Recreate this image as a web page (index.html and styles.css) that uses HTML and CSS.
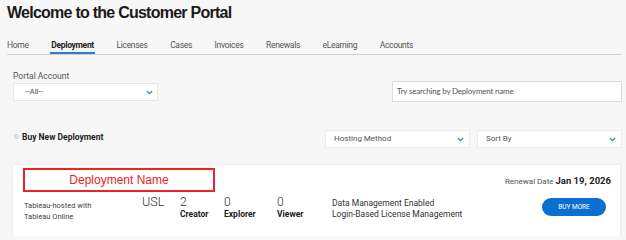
FILE: index.html
```html
<!DOCTYPE html>
<html lang="en">
<head>
<meta charset="utf-8">
<title>Customer Portal</title>
<link rel="stylesheet" href="styles.css">
</head>
<body>
<div class="page">
  <h1 class="title">Welcome to the Customer Portal</h1>
  <nav class="tabs">
    <a class="tab">Home</a>
    <a class="tab active">Deployment</a>
    <a class="tab">Licenses</a>
    <a class="tab">Cases</a>
    <a class="tab">Invoices</a>
    <a class="tab">Renewals</a>
    <a class="tab">eLearning</a>
    <a class="tab">Accounts</a>
  </nav>
  <div class="filters">
    <div class="field">
      <div class="label">Portal Account</div>
      <div class="select account">
        <span class="select-text">--All--</span>
        <svg class="chev" width="7" height="5" viewBox="0 0 7 5"><path d="M0.8 1 L3.5 3.6 L6.2 1" fill="none" stroke="#2f80d3" stroke-width="1.2"/></svg>
      </div>
    </div>
    <div class="search">Try searching by Deployment name</div>
  </div>
  <div class="actions">
    <div class="buy"><span class="dot"></span>Buy New Deployment</div>
    <div class="sorts">
      <div class="select sort">
        <span class="select-text">Hosting Method</span>
        <svg class="chev" width="7" height="5" viewBox="0 0 7 5"><path d="M0.8 1 L3.5 3.6 L6.2 1" fill="none" stroke="#2f80d3" stroke-width="1.2"/></svg>
      </div>
      <div class="select sort">
        <span class="select-text">Sort By</span>
        <svg class="chev" width="7" height="5" viewBox="0 0 7 5"><path d="M0.8 1 L3.5 3.6 L6.2 1" fill="none" stroke="#2f80d3" stroke-width="1.2"/></svg>
      </div>
    </div>
  </div>
  <div class="card">
    <div class="card-top">
      <div class="name-box">Deployment Name</div>
      <div class="renewal">Renewal Date <b>Jan 19, 2026</b></div>
    </div>
    <div class="card-row">
      <div class="hosting">Tableau-hosted with<br>Tableau Online</div>
      <div class="type">USL</div>
      <div class="count"><span class="num">2</span><span class="role">Creator</span></div>
      <div class="count"><span class="num">0</span><span class="role">Explorer</span></div>
      <div class="count"><span class="num">0</span><span class="role">Viewer</span></div>
      <div class="features">Data Management Enabled<br>Login-Based License Management</div>
      <div class="btn">BUY MORE</div>
    </div>
  </div>
</div>
</body>
</html>
```

FILE: styles.css
```css
html, body {
  margin: 0;
  padding: 0;
  background: #f7f7f7;
}
body {
  font-family: Roboto, "Liberation Sans", Arial, sans-serif;
  color: #222;
}
.page {
  padding: 0 4px 0 7px;
  width: 615px;
}
.title {
  margin: 0;
  padding-top: 2px;
  font-family: "Liberation Sans", Arial, sans-serif;
  font-weight: 700;
  font-size: 16px;
  line-height: 21px;
  letter-spacing: -0.75px;
  color: #1a1a1a;
}
.tabs {
  display: flex;
  gap: 22.5px;
  margin-top: 15px;
  border-bottom: 1px solid #cfcfcf;
}
.tab {
  font-size: 8.5px;
  letter-spacing: -0.3px;
  line-height: 11px;
  padding: 2px 0 3px;
  color: #555;
}
.tab.active {
  color: #222;
  font-weight: 700;
  padding-bottom: 1px;
  border-bottom: 2px solid #2a7fd4;
  margin: 0 -1px;
  padding-left: 1px;
  padding-right: 1px;
}
.filters {
  display: flex;
  justify-content: space-between;
  align-items: flex-end;
  margin-top: 16px;
  padding-left: 6px;
}
.label {
  font-size: 8.5px;
  line-height: 10px;
  color: #555;
  margin-bottom: 2px;
}
.select {
  display: flex;
  align-items: center;
  justify-content: space-between;
  box-sizing: border-box;
  height: 18px;
  background: #fff;
  border: 1px solid #e6e6e6;
  font-size: 8px;
  color: #555;
}
.select.account {
  width: 145px;
  padding: 0 4px 0 11px;
}
.select-text {
  line-height: 10px;
}
.chev {
  display: block;
}
.search {
  box-sizing: border-box;
  width: 230px;
  height: 21px;
  margin-bottom: -1px;
  padding: 0 4px;
  background: #fff;
  border: 1px solid #dcdcdc;
  font-family: Lato, Roboto, sans-serif;
  font-size: 8px;
  line-height: 19px;
  color: #555;
  letter-spacing: -0.2px;
}
.actions {
  display: flex;
  justify-content: space-between;
  align-items: center;
  margin-top: 29px;
  padding-left: 7px;
}
.buy {
  display: flex;
  align-items: center;
  font-size: 8.5px;
  font-weight: 700;
  color: #222;
  margin-top: -5px;
}
.dot {
  width: 5px;
  height: 5px;
  border-radius: 50%;
  border: 1px solid #b8d2ee;
  background: #e4eef9;
  box-sizing: border-box;
  margin-right: 3px;
}
.sorts {
  display: flex;
  gap: 7px;
}
.select.sort {
  width: 145px;
  height: 18px;
  padding: 0 5px 0 8px;
  border-color: #ececec;
}
.card {
  margin-top: 17px;
  margin-left: 6px;
  margin-right: 2px;
  background: #fff;
  box-shadow: 0 0 2px rgba(0, 0, 0, 0.12);
  height: 71px;
  box-sizing: border-box;
  padding: 3px 0 0 10px;
}
.card-top {
  display: flex;
  justify-content: space-between;
  align-items: center;
  padding-right: 9px;
}
.name-box {
  box-sizing: border-box;
  width: 192px;
  height: 24px;
  border: 2px solid #ee2222;
  color: #ee2222;
  font-size: 12px;
  line-height: 20px;
  text-align: center;
  font-family: "Liberation Sans", Arial, sans-serif;
}
.renewal {
  font-size: 8px;
  color: #555;
  margin-top: 1px;
}
.renewal b {
  font-size: 9.5px;
  color: #222;
}
.card-row {
  display: grid;
  grid-template-columns: 118px 38px 44px 53px 55px 1fr auto;
  align-items: start;
  margin-top: 3px;
  padding-left: 1px;
  padding-right: 14px;
}
.hosting {
  font-size: 7.5px;
  line-height: 11px;
  color: #444;
  padding-top: 5px;
}
.type {
  font-size: 12.5px;
  line-height: 14px;
  font-weight: 300;
  color: #333;
}
.count {
  display: flex;
  flex-direction: column;
}
.num {
  font-size: 12px;
  line-height: 14px;
  font-weight: 300;
  color: #333;
}
.role {
  font-size: 8.5px;
  line-height: 10px;
  font-weight: 700;
  color: #222;
}
.features {
  font-size: 8.5px;
  line-height: 10.5px;
  color: #333;
  padding-top: 3px;
}
.btn {
  width: 64px;
  height: 18px;
  border-radius: 9px;
  background: #0b6fd1;
  color: #fff;
  font-size: 6.5px;
  line-height: 18px;
  text-align: center;
  margin-top: 3px;
}
```
